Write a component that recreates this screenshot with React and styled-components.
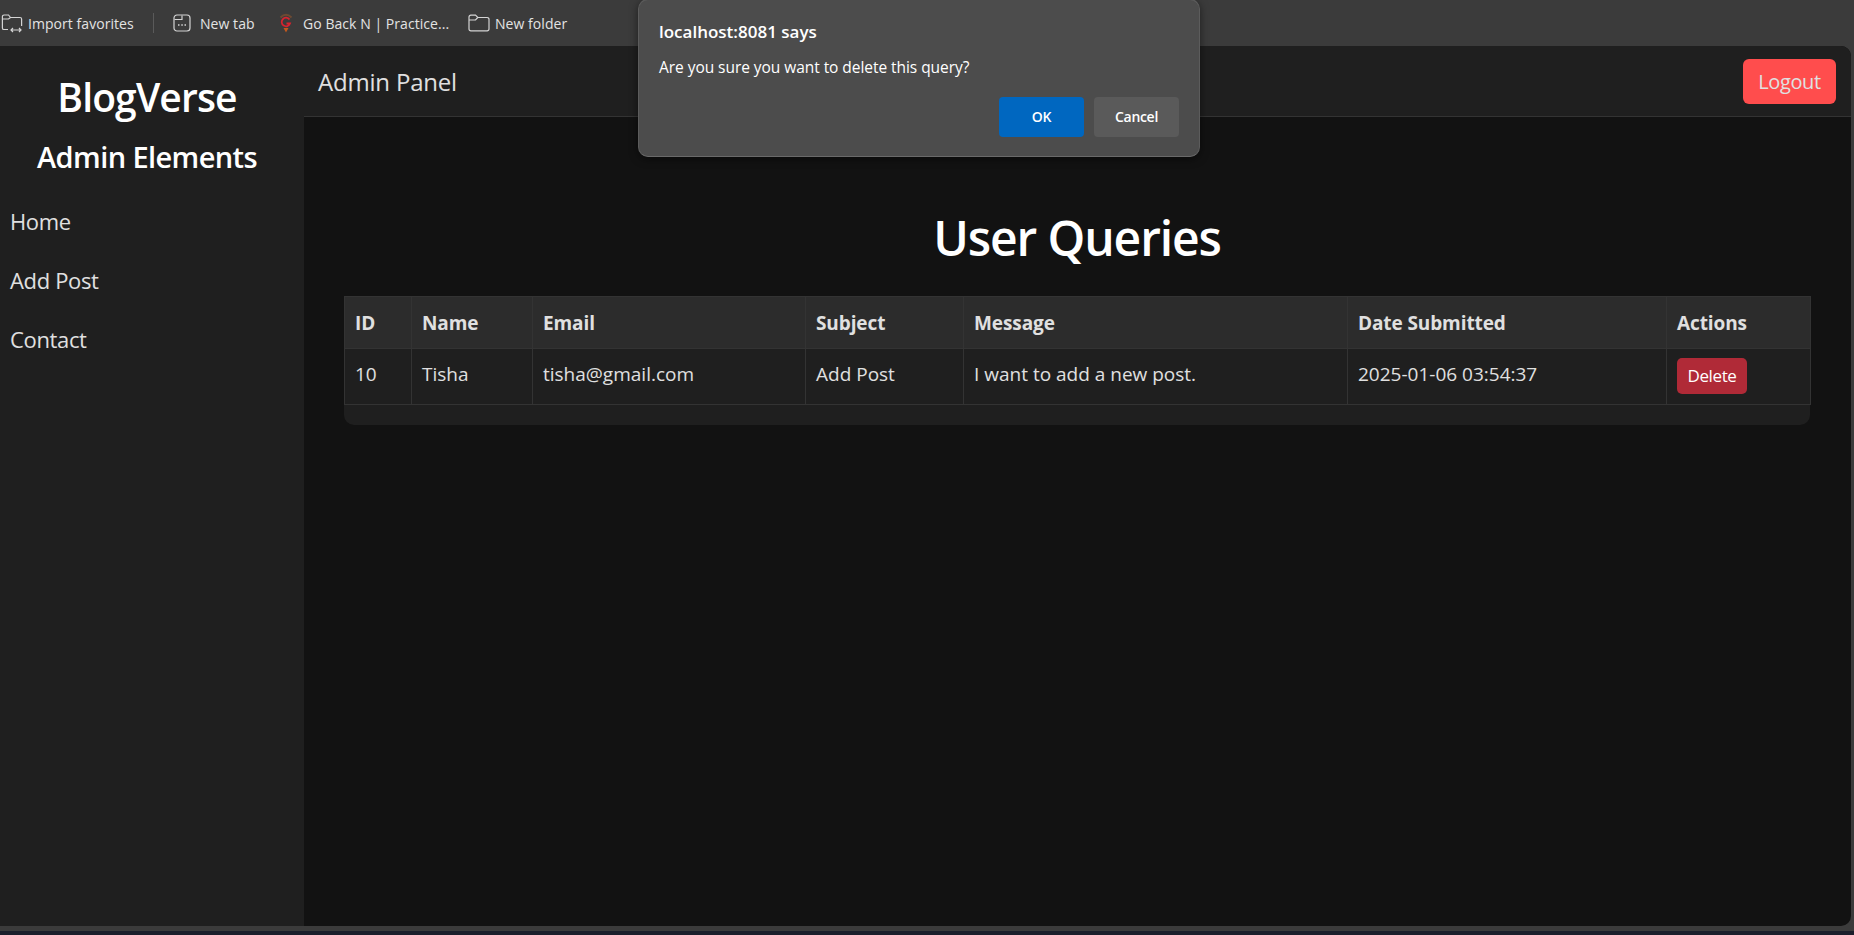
import * as React from "react";
import styled, { createGlobalStyle } from "styled-components";

const GlobalStyle = createGlobalStyle`
  html, body {
    margin: 0;
    padding: 0;
    background: #1b1e2b;
    overflow: hidden;
  }
  * {
    box-sizing: border-box;
  }
`;

const columns = [
  { label: "ID", width: 67 },
  { label: "Name", width: 121 },
  { label: "Email", width: 273 },
  { label: "Subject", width: 158 },
  { label: "Message", width: 384 },
  { label: "Date Submitted", width: 319 },
  { label: "Actions", width: 144 },
];

function ImportIcon() {
  return (
    <svg width="22" height="20" viewBox="0 0 22 20" fill="none" stroke="#d4d4d4" strokeWidth="1.2">
      <path d="M7 16.500H3a1.600 1.600 0 0 1-1.600-1.600V3.600A1.600 1.600 0 0 1 3 2h4.500l2 2.500H19a1.600 1.600 0 0 1 1.600 1.600V13" />
      <path d="M1.500 6h6l2-1.500" />
      <path d="M10 17h10M12 15l-2 2 2 2M18 15l2 2-2 2" />
    </svg>
  );
}

function NewTabIcon() {
  return (
    <svg width="18" height="18" viewBox="0 0 18 18" fill="none" stroke="#d4d4d4" strokeWidth="1.2">
      <rect x="1" y="1" width="16" height="16" rx="3" />
      <path d="M1.500 5.500H9V1.500" />
      <path d="M5 11h1.500M8.300 11h1.500M11.500 11H13" strokeWidth="1.600" />
    </svg>
  );
}

function PracticeIcon() {
  return (
    <svg width="14" height="20" viewBox="0 0 14 20" fill="none">
      <path d="M1.500 4.500Q7-1 12.500 4.500" stroke="#6d4a32" strokeWidth="2" />
      <path d="M10.500 6.500A4.300 4.300 0 1 0 11 10.500H7.500" stroke="#d8232f" strokeWidth="1.800" />
      <path d="M4.500 15h5L7 19.500z" fill="#c4581d" />
    </svg>
  );
}

function FolderIcon() {
  return (
    <svg width="22" height="18" viewBox="0 0 22 18" fill="none" stroke="#d4d4d4" strokeWidth="1.2">
      <path d="M1 3a1.800 1.800 0 0 1 1.800-1.800h4.700l2.300 2.300h9.400A1.800 1.800 0 0 1 21 5.300V15a1.800 1.800 0 0 1-1.800 1.800H2.800A1.800 1.800 0 0 1 1 15z" />
      <path d="M1 6h6.500l2.300-2.500" />
    </svg>
  );
}

function App() {
  return (
    <Page>
      <GlobalStyle />
      <BookmarksBar>
        <Bookmark $gap={5} $width={134}>
          <ImportIcon />
          Import favorites
        </Bookmark>
        <BarDivider />
        <Bookmark $gap={9} $width={88}>
          <NewTabIcon />
          New tab
        </Bookmark>
        <Bookmark $gap={10} $width={171}>
          <PracticeIcon />
          Go Back N | Practice...
        </Bookmark>
        <Bookmark $gap={5} $width={102}>
          <FolderIcon />
          New folder
        </Bookmark>
      </BookmarksBar>

      <BrowserWindow>
        <Sidebar>
          <Brand>BlogVerse</Brand>
          <SidebarTitle>Admin Elements</SidebarTitle>
          <NavList>
            <NavItem>Home</NavItem>
            <NavItem>Add Post</NavItem>
            <NavItem>Contact</NavItem>
          </NavList>
        </Sidebar>

        <Content>
          <TopBar>
            <PanelTitle>Admin Panel</PanelTitle>
            <LogoutButton>Logout</LogoutButton>
          </TopBar>
          <Main>
            <PageTitle>User Queries</PageTitle>
            <TableCard>
              <QueryTable>
                <colgroup>
                  {columns.map((c) => (
                    <col key={c.label} style={{ width: c.width }} />
                  ))}
                </colgroup>
                <thead>
                  <tr>
                    {columns.map((c) => (
                      <HeadCell key={c.label}>{c.label}</HeadCell>
                    ))}
                  </tr>
                </thead>
                <tbody>
                  <tr>
                    <BodyCell>10</BodyCell>
                    <BodyCell>Tisha</BodyCell>
                    <BodyCell>tisha@gmail.com</BodyCell>
                    <BodyCell>Add Post</BodyCell>
                    <BodyCell>I want to add a new post.</BodyCell>
                    <BodyCell>2025-01-06 03:54:37</BodyCell>
                    <ActionCell>
                      <DeleteButton>Delete</DeleteButton>
                    </ActionCell>
                  </tr>
                </tbody>
              </QueryTable>
            </TableCard>
          </Main>
        </Content>
      </BrowserWindow>

      <BottomStrip />
      <Taskbar />

      <Dialog>
        <DialogTitle>localhost:8081 says</DialogTitle>
        <DialogMessage>Are you sure you want to delete this query?</DialogMessage>
        <DialogActions>
          <DialogButton $primary>OK</DialogButton>
          <DialogButton>Cancel</DialogButton>
        </DialogActions>
      </Dialog>
    </Page>
  );
}

const uiFont = `"Open Sans", "Noto Sans", sans-serif`;

const Page = styled.div`
  position: relative;
  display: flex;
  flex-direction: column;
  width: 1854px;
  height: 935px;
  overflow: hidden;
  background: #3b3b3b;
  font-family: ${uiFont};
`;

const BookmarksBar = styled.div`
  display: flex;
  align-items: center;
  height: 46px;
  flex-shrink: 0;
  padding-left: 1px;
  background: #3b3b3b;
`;

const Bookmark = styled.div`
  display: flex;
  align-items: center;
  gap: ${(p) => p.$gap}px;
  width: ${(p) => p.$width}px;
  margin-right: 18px;
  font-size: 14px;
  letter-spacing: 0.05px;
  white-space: nowrap;
  color: #e3e3e3;
`;

const BarDivider = styled.div`
  width: 1px;
  height: 20px;
  margin-right: 19px;
  background: #5a5a5a;
`;

const BrowserWindow = styled.div`
  display: flex;
  flex: 1;
  min-height: 0;
  margin-right: 3px;
  border-radius: 0 10px 10px 0;
  overflow: hidden;
  background: #121212;
`;

const Sidebar = styled.aside`
  width: 304px;
  flex-shrink: 0;
  padding: 25px 10px 0 0;
  background: #1f1f1f;
  color: #fff;
`;

const Brand = styled.h1`
  margin: 0;
  font-size: 39px;
  line-height: 52px;
  font-weight: 600;
  letter-spacing: -0.85px;
  text-align: center;
`;

const SidebarTitle = styled.h2`
  margin: 14px 0 0;
  font-size: 29px;
  line-height: 40px;
  font-weight: 600;
  letter-spacing: -0.6px;
  text-align: center;
`;

const NavList = styled.nav`
  display: flex;
  flex-direction: column;
  gap: 29px;
  margin-top: 29px;
  padding-left: 10px;
`;

const NavItem = styled.a`
  font-size: 22px;
  line-height: 30px;
  letter-spacing: -0.35px;
  color: #e0e0e0;
`;

const Content = styled.div`
  display: flex;
  flex-direction: column;
  flex: 1;
  min-width: 0;
`;

const TopBar = styled.header`
  display: flex;
  align-items: center;
  justify-content: space-between;
  height: 71px;
  padding: 0 15px 0 14px;
  background: #1f1f1f;
  border-bottom: 1px solid #333;
`;

const PanelTitle = styled.div`
  font-size: 24px;
  letter-spacing: -0.2px;
  color: #e0e0e0;
`;

const LogoutButton = styled.button`
  width: 93px;
  height: 45px;
  padding: 0;
  border: 0;
  border-radius: 6px;
  background: #ff4d4d;
  color: #e0e0e0;
  font-family: inherit;
  font-size: 20px;
  letter-spacing: -0.4px;
`;

const Main = styled.main`
  flex: 1;
  padding: 0 41px 0 40px;
`;

const PageTitle = styled.h1`
  margin: 86px 0 0;
  height: 93px;
  font-size: 48px;
  line-height: 70px;
  font-weight: 600;
  letter-spacing: -1.1px;
  text-align: center;
  color: #fff;
`;

const TableCard = styled.div`
  padding-bottom: 20px;
  border-radius: 0 0 10px 10px;
  background: #1f1f1f;
`;

const QueryTable = styled.table`
  width: 100%;
  table-layout: fixed;
  border-collapse: collapse;
  font-size: 19px;
  color: #e0e0e0;
`;

const HeadCell = styled.th`
  height: 52px;
  padding: 0 10px;
  border: 1px solid #333;
  background: #2c2c2c;
  font-size: 19px;
  font-weight: 700;
  letter-spacing: -0.1px;
  text-align: left;
  white-space: nowrap;
`;

const BodyCell = styled.td`
  height: 56px;
  padding: 0 10px 5px;
  border: 1px solid #333;
  background: #1f1f1f;
  white-space: nowrap;
`;

const ActionCell = styled(BodyCell)`
  padding: 0 10px 2px;
`;

const DeleteButton = styled.button`
  display: block;
  width: 70px;
  height: 36px;
  padding: 0;
  border: 0;
  border-radius: 5px;
  background: #b02a37;
  color: #fff;
  font-family: inherit;
  font-size: 17px;
  letter-spacing: -0.4px;
`;

const BottomStrip = styled.div`
  height: 5px;
  flex-shrink: 0;
  background: #3b3b3b;
`;

const Taskbar = styled.div`
  height: 4px;
  flex-shrink: 0;
  background: #1b1e2b;
`;

const Dialog = styled.div`
  position: absolute;
  top: -1px;
  left: 638px;
  width: 562px;
  height: 158px;
  padding: 21px 20px 0 20px;
  border: 1px solid #5c5c5c;
  border-bottom-color: #6a6a6a;
  border-radius: 10px;
  background: #4c4c4c;
  box-shadow: 0 2px 8px rgba(0, 0, 0, 0.5);
  color: #fff;
`;

const DialogTitle = styled.div`
  font-size: 17px;
  line-height: 22px;
  font-weight: 600;
`;

const DialogMessage = styled.div`
  margin-top: 13px;
  font-size: 15.500px;
  line-height: 22px;
  letter-spacing: -0.05px;
`;

const DialogActions = styled.div`
  display: flex;
  justify-content: flex-end;
  gap: 10px;
  margin-top: 19px;
`;

const DialogButton = styled.button`
  width: 85px;
  height: 40px;
  padding: 0 0 2px;
  border: 0;
  border-radius: 4px;
  background: ${(p) => (p.$primary ? "#0067c0" : "#5a5a5a")};
  color: #fff;
  font-family: inherit;
  font-size: 14px;
  font-weight: 600;
  letter-spacing: -0.3px;
`;

export default App;
